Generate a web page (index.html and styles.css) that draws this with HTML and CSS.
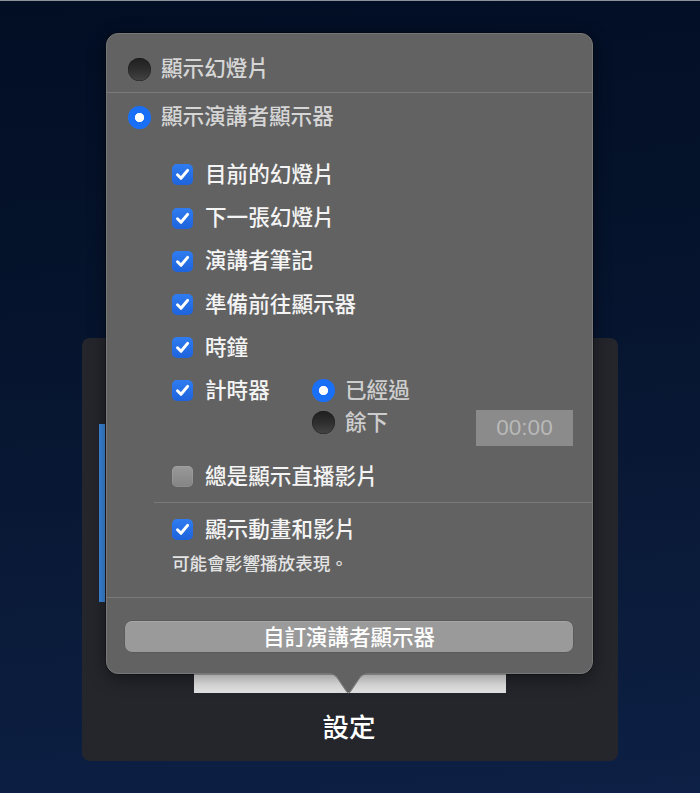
FILE: index.html
```html
<!DOCTYPE html>
<html lang="zh-Hant">
<head>
<meta charset="utf-8">
<link rel="stylesheet" href="styles.css">
</head>
<body>
<div class="panel">
  <div class="bar"></div>
  <div class="thumb"></div>
  <div class="caption">設定</div>
</div>

<div class="popover">
  <div class="top">
    <div class="radio-row first">
      <span class="radio off"></span><span class="rlabel">顯示幻燈片</span>
    </div>
    <div class="sep"></div>
    <div class="radio-row second">
      <span class="radio on"></span><span class="rlabel">顯示演講者顯示器</span>
    </div>
  </div>

  <div class="checks">
    <div class="check-row"><span class="cb on"><svg viewBox="0 0 21 21"><path d="M5.5 10.8 L9 14.3 L15.6 6.4"/></svg></span><span class="clabel">目前的幻燈片</span></div>
    <div class="check-row"><span class="cb on"><svg viewBox="0 0 21 21"><path d="M5.5 10.8 L9 14.3 L15.6 6.4"/></svg></span><span class="clabel">下一張幻燈片</span></div>
    <div class="check-row"><span class="cb on"><svg viewBox="0 0 21 21"><path d="M5.5 10.8 L9 14.3 L15.6 6.4"/></svg></span><span class="clabel">演講者筆記</span></div>
    <div class="check-row"><span class="cb on"><svg viewBox="0 0 21 21"><path d="M5.5 10.8 L9 14.3 L15.6 6.4"/></svg></span><span class="clabel">準備前往顯示器</span></div>
    <div class="check-row"><span class="cb on"><svg viewBox="0 0 21 21"><path d="M5.5 10.8 L9 14.3 L15.6 6.4"/></svg></span><span class="clabel">時鐘</span></div>
    <div class="timer">
      <div class="check-row timer-check"><span class="cb on"><svg viewBox="0 0 21 21"><path d="M5.5 10.8 L9 14.3 L15.6 6.4"/></svg></span><span class="clabel">計時器</span></div>
      <div class="timer-radios">
        <div class="sub-radio"><span class="radio on"></span><span class="rlabel">已經過</span></div>
        <div class="sub-radio"><span class="radio off"></span><span class="rlabel">餘下</span></div>
      </div>
      <div class="time-field">00:00</div>
    </div>
    <div class="check-row"><span class="cb off"></span><span class="clabel">總是顯示直播影片</span></div>
  </div>

  <div class="sep inset"></div>

  <div class="checks lower">
    <div class="check-row"><span class="cb on"><svg viewBox="0 0 21 21"><path d="M5.5 10.8 L9 14.3 L15.6 6.4"/></svg></span><span class="clabel">顯示動畫和影片</span></div>
  </div>
  <div class="desc">可能會影響播放表現。</div>

  <div class="sep low"></div>

  <div class="button">自訂演講者顯示器</div>

  <svg class="arrow" viewBox="0 0 47 21" width="47" height="21">
    <path class="arrow-fill" d="M0 0 C8 0 10 1.5 13 5.5 L21.6 18.3 Q23.5 20.8 25.4 18.3 L34 5.5 C37 1.5 39 0 47 0 Z"/>
    <path class="arrow-edge" d="M0 0.5 C8 0.5 10 2 13 6 L21.6 18.8 Q23.5 21.3 25.4 18.8 L34 6 C37 2 39 0.5 47 0.5"/>
  </svg>
</div>
</body>
</html>
```

FILE: styles.css
```css
* { box-sizing: border-box; }

html, body {
  margin: 0;
  padding: 0;
}

body {
  width: 700px;
  height: 793px;
  overflow: hidden;
  position: relative;
  font-family: "Noto Sans CJK TC", "Noto Sans", sans-serif;
  background: linear-gradient(175deg, #020e24 0%, #05132c 35%, #0a1a38 70%, #0d2045 100%);
  border-top: 1px solid #8c929a;
  display: flex;
  flex-direction: column;
}

/* underlying dark panel */
.panel {
  margin: 337px 0 0 82px;
  width: 536px;
  height: 423px;
  background: #25262c;
  border-radius: 8px;
  display: flex;
  flex-direction: column;
}

.bar {
  margin: 86px 0 0 17px;
  width: 6px;
  height: 178px;
  background: #3b87dc;
}

.thumb {
  margin: 51px 0 0 112px;
  width: 312px;
  height: 40px;
  background: linear-gradient(180deg, #fafafa 0%, #e2e2e2 100%);
}

.caption {
  margin-top: 16px;
  text-align: center;
  color: #ffffff;
  font-size: 26.5px;
  font-weight: 500;
  line-height: 34px;
  padding-right: 2px;
}

/* popover */
.popover {
  position: absolute;
  left: 106px;
  top: 32px;
  width: 487px;
  height: 641px;
  background: #626262;
  border: 1px solid #777777;
  border-radius: 12px;
  box-shadow: 0 4px 18px rgba(0, 0, 0, 0.45), 0 0 0 0.5px rgba(0,0,0,0.5);
  display: flex;
  flex-direction: column;
}

.top {
  padding-top: 12px;
  display: flex;
  flex-direction: column;
}

.radio-row {
  display: flex;
  align-items: center;
  padding-left: 21px;
}
.radio-row.first { height: 46px; }
.radio-row.second { height: 48px; }

.radio {
  width: 23px;
  height: 23px;
  border-radius: 50%;
  flex: none;
  margin-right: 10px;
  position: relative;
}
.radio.off {
  background: linear-gradient(180deg, #1f1f1f 0%, #2e2e2e 50%, #444444 100%);
  box-shadow: inset 0 0 0 0.5px rgba(0,0,0,0.4);
}
.radio.on {
  background: radial-gradient(circle at 50% 50%, #ffffff 0, #ffffff 4.3px, #1a6ff7 5px, #1a6ff7 100%);
}

.rlabel {
  color: #d6d6d6;
  font-size: 21.6px;
  font-weight: 500;
  line-height: 30px;
  padding-bottom: 4px;
  white-space: nowrap;
}

.sep {
  height: 1px;
  background: #7a7a7a;
  flex: none;
}
.sep.inset {
  margin: 3px 0 0 47px;
}
.sep.low {
  margin-top: 22px;
}

.checks {
  padding-left: 65px;
  margin-top: 12.4px;
  display: flex;
  flex-direction: column;
}
.checks.lower {
  margin-top: 5.4px;
}

.check-row {
  height: 43.2px;
  display: flex;
  align-items: center;
  flex: none;
}

.cb {
  width: 21px;
  height: 21px;
  border-radius: 5px;
  flex: none;
  margin-right: 12px;
  display: flex;
  align-items: center;
  justify-content: center;
}
.cb.on {
  background: linear-gradient(180deg, #2f7cf0 0%, #1e63dc 100%);
}
.cb.off {
  background: linear-gradient(180deg, #999999 0%, #848484 100%);
  box-shadow: inset 0 0 0 0.5px rgba(255,255,255,0.15);
}
.cb svg {
  width: 21px;
  height: 21px;
}
.cb svg path {
  fill: none;
  stroke: #ffffff;
  stroke-width: 3;
  stroke-linecap: round;
  stroke-linejoin: round;
}

.clabel {
  color: #f4f4f4;
  font-size: 21.6px;
  font-weight: 500;
  line-height: 30px;
  padding-bottom: 4px;
  white-space: nowrap;
}

.timer {
  display: flex;
  align-items: flex-start;
  height: 86px;
}
.timer-check {
  width: 140px;
}
.timer-radios {
  padding-top: 5.6px;
  display: flex;
  flex-direction: column;
}
.sub-radio {
  height: 32px;
  display: flex;
  align-items: center;
}
.sub-radio .radio { margin-right: 10px; }
.sub-radio .rlabel { color: #cdcdcd; }

.time-field {
  margin: 40.6px 19px 0 auto;
  width: 97px;
  height: 36px;
  background: #8b8b8b;
  color: #b9b9b9;
  font-family: "Liberation Sans", Arial, sans-serif;
  font-size: 22.5px;
  line-height: 36px;
  text-align: center;
}

.desc {
  margin-top: 0;
  padding-left: 65px;
  color: #e4e4e4;
  font-size: 17.6px;
  font-weight: 500;
  line-height: 24px;
}

.button {
  margin: 23.4px 19px 0 18px;
  height: 31px;
  border-radius: 7px;
  background: #9a9a9a;
  box-shadow: inset 0 1px 0 rgba(255,255,255,0.12), 0 0 0 0.5px rgba(0,0,0,0.15);
  color: #ffffff;
  font-size: 21.5px;
  font-weight: 500;
  line-height: 30px;
  padding-bottom: 2px;
  text-align: center;
}

.arrow {
  position: absolute;
  left: 218px;
  bottom: -21px;
  overflow: visible;
}
.arrow-fill { fill: #626262; }
.arrow-edge { fill: none; stroke: #777777; stroke-width: 1; }
```
